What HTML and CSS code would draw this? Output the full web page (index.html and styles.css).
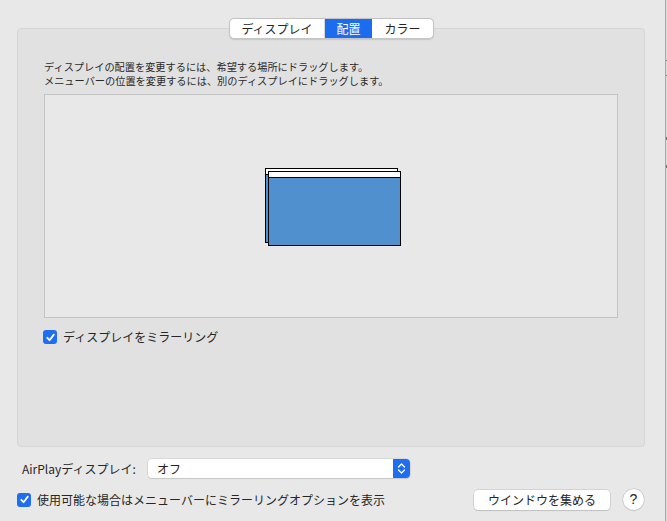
FILE: index.html
```html
<!DOCTYPE html>
<html lang="ja">
<head>
<meta charset="utf-8">
<link rel="stylesheet" href="styles.css">
</head>
<body>
<div class="window">
  <div class="main">
    <div class="tabs-row">
      <div class="segmented">
        <span class="seg seg-first">ディスプレイ</span>
        <span class="seg seg-active">配置</span>
        <span class="seg seg-last">カラー</span>
      </div>
    </div>
    <div class="panel">
      <p class="hint">ディスプレイの配置を変更するには、希望する場所にドラッグします。<br>メニューバーの位置を変更するには、別のディスプレイにドラッグします。</p>
      <div class="arrange">
        <div class="displays">
          <div class="disp disp-back"><div class="menubar"></div></div>
          <div class="disp disp-front"><div class="menubar"></div></div>
        </div>
      </div>
      <label class="check-row mirror">
        <span class="checkbox"><svg viewBox="0 0 13 13" width="13" height="13"><path d="M3.3 6.8 L5.6 9.2 L9.8 3.6" fill="none" stroke="#fff" stroke-width="1.8" stroke-linecap="round" stroke-linejoin="round"/></svg></span>
        <span class="check-label">ディスプレイをミラーリング</span>
      </label>
    </div>
    <div class="airplay-row">
      <span class="airplay-label">AirPlayディスプレイ:</span>
      <div class="popup">
        <span class="popup-text">オフ</span>
        <span class="popup-arrows"><svg viewBox="0 0 17 19" width="17" height="19"><path d="M5.5 8 L8.5 5 L11.5 8 M5.5 11 L8.5 14 L11.5 11" fill="none" stroke="#fff" stroke-width="1.3" stroke-linecap="round" stroke-linejoin="round"/></svg></span>
      </div>
    </div>
    <div class="bottom-row">
      <label class="check-row">
        <span class="checkbox"><svg viewBox="0 0 13 13" width="13" height="13"><path d="M3.3 6.8 L5.6 9.2 L9.8 3.6" fill="none" stroke="#fff" stroke-width="1.8" stroke-linecap="round" stroke-linejoin="round"/></svg></span>
        <span class="check-label">使用可能な場合はメニューバーにミラーリングオプションを表示</span>
      </label>
      <div class="bottom-buttons">
        <button class="btn">ウインドウを集める</button>
        <button class="help">?</button>
      </div>
    </div>
  </div>
  <div class="edge">
    <span class="tick t1"></span>
    <span class="tick t2"></span>
    <span class="tick t3"></span>
    <span class="tick t4"></span>
  </div>
</div>
</body>
</html>
```
FILE: styles.css
```css
* { box-sizing: border-box; }
html, body {
  margin: 0;
  padding: 0;
  width: 667px;
  height: 521px;
  overflow: hidden;
  background: #e8e8e8;
  font-family: "Noto Sans CJK JP", "Noto Sans", sans-serif;
  color: #222;
}
.window {
  display: flex;
  width: 667px;
  height: 521px;
}
.main {
  flex: 0 0 665px;
  display: flex;
  flex-direction: column;
}
.edge {
  flex: 0 0 2px;
  border-left: 1px solid #a9a9a9;
  background: #dcdcdc;
  position: relative;
}
.tick {
  position: absolute;
  left: 0;
  width: 1px;
  height: 1px;
  background: #707070;
}
.t1 { top: 60px; }
.t2 { top: 75px; }
.t3 { top: 137px; height: 3px; }
.t4 { top: 165px; height: 3px; }

.tabs-row {
  display: flex;
  justify-content: flex-start;
  padding: 18px 0 0 229px;
  height: 39px;
  position: relative;
  z-index: 2;
}
.segmented {
  display: flex;
  height: 21px;
  border: 1px solid #c4c4c4;
  border-radius: 5px;
  background: #fff;
  box-shadow: 0 0.5px 1px rgba(0,0,0,0.12);
  overflow: hidden;
  font-size: 12px;
  line-height: 19px;
}
.seg {
  display: block;
  text-align: center;
  color: #262626;
  border-right: 1px solid #d8d8d8;
}
.seg-first { width: 95px; }
.seg-active {
  width: 47px;
  background: #1c6cf0;
  color: #fff;
  border-right: none;
}
.seg-last { width: 61px; border-right: none; }

.panel {
  margin: -11px 0 0 17px;
  width: 628px;
  height: 419px;
  background: #e1e1e1;
  border: 1px solid #d6d6d6;
  border-radius: 4px;
  padding: 31px 0 0 26px;
  position: relative;
  z-index: 1;
}
.hint {
  margin: 0;
  font-size: 10.2px;
  line-height: 14px;
  color: #2a2a2a;
}
.arrange {
  margin-top: 6px;
  width: 574px;
  height: 224px;
  background: #e8e8e8;
  border: 1px solid #c3c3c3;
  display: flex;
  align-items: center;
  justify-content: center;
}
.displays {
  position: relative;
  width: 136px;
  height: 78px;
  margin: 2px 0 0 4px;
}
.disp {
  position: absolute;
  width: 133px;
  height: 75px;
  border: 1px solid #000;
  background: #5090cf;
}
.disp-back { left: 0; top: 0; }
.disp-front { left: 3px; top: 3px; }
.menubar {
  height: 6px;
  background: #fff;
  border-bottom: 1px solid #000;
}

.check-row {
  display: flex;
  align-items: center;
  gap: 6px;
  font-size: 12px;
  line-height: 16px;
  color: #262626;
}
.mirror {
  margin: 11px 0 0 -1px;
}
.checkbox {
  width: 14px;
  height: 14px;
  border-radius: 3px;
  background: #1f6ef0;
  display: flex;
  align-items: center;
  justify-content: center;
  flex: 0 0 14px;
}
.checkbox svg { display: block; }

.airplay-row {
  display: flex;
  align-items: center;
  margin: 11px 0 0 22px;
  height: 20px;
}
.airplay-label {
  font-size: 12px;
  color: #262626;
  width: 126px;
}
.popup {
  display: flex;
  width: 262px;
  height: 19px;
  background: #fff;
  border-radius: 4px;
  box-shadow: 0 0 0 0.5px #c8c8c8, 0 1px 1px rgba(0,0,0,0.15);
  overflow: hidden;
}
.popup-text {
  flex: 1;
  font-size: 12px;
  line-height: 19px;
  padding-left: 9px;
  color: #222;
}
.popup-arrows {
  width: 17px;
  height: 19px;
  background: #1f6ef0;
  display: flex;
}

.bottom-row {
  display: flex;
  align-items: center;
  justify-content: space-between;
  margin: 11px 0 0 17px;
  padding-right: 21px;
}
.bottom-buttons {
  display: flex;
  align-items: center;
  gap: 13px;
}
.btn {
  width: 136px;
  height: 20px;
  background: #fff;
  border: none;
  border-radius: 4px;
  box-shadow: 0 0 0 0.5px #bdbdbd, 0 1px 1px rgba(0,0,0,0.15);
  font-family: "Noto Sans CJK JP", "Noto Sans", sans-serif;
  font-size: 12px;
  line-height: 20px;
  color: #262626;
  padding: 0;
}
.help {
  width: 21px;
  height: 21px;
  border-radius: 50%;
  background: #fff;
  border: none;
  box-shadow: 0 0 0 0.5px #bdbdbd, 0 1px 1px rgba(0,0,0,0.15);
  font-family: "Liberation Sans", sans-serif;
  font-size: 14px;
  line-height: 21px;
  padding: 0;
  color: #262626;
}
```
